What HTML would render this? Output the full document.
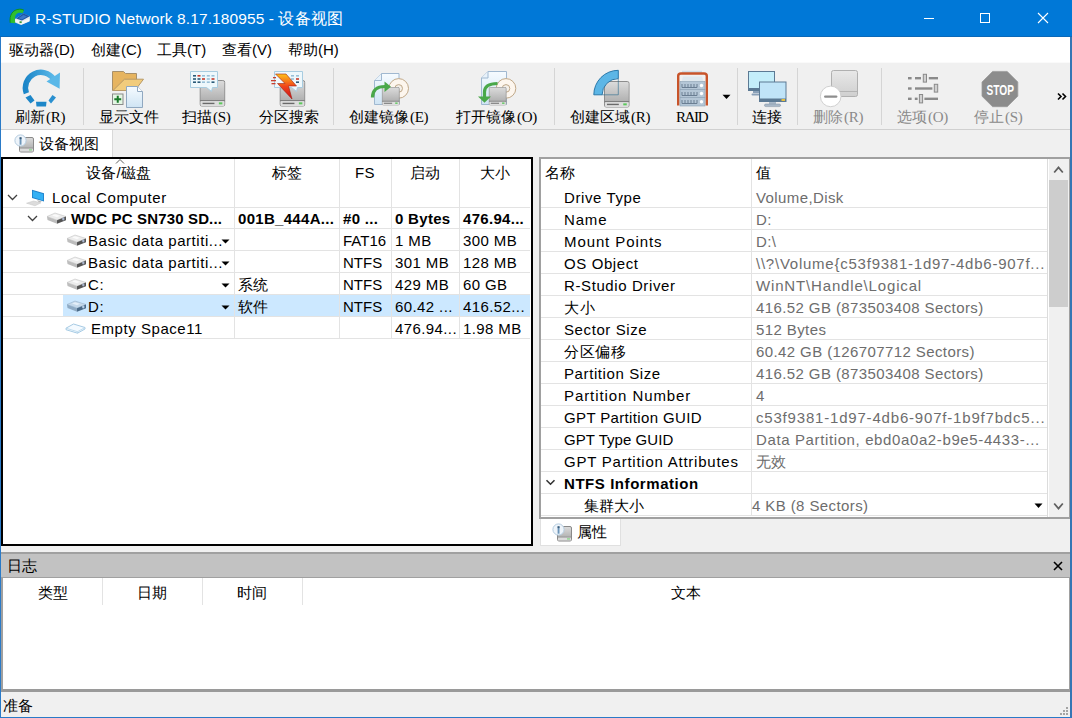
<!DOCTYPE html>
<html><head><meta charset="utf-8">
<style>
*{box-sizing:border-box;margin:0;padding:0}
html,body{width:1072px;height:718px;overflow:hidden;background:#f0f0f0;font-family:"Liberation Sans",sans-serif;font-size:15px;color:#000}
.a{position:absolute;white-space:nowrap}
.t{position:absolute;white-space:nowrap;line-height:17px;height:17px}
.sep{position:absolute;top:68px;width:1px;height:57px;background:#d5d5d5}
.tl{position:absolute;white-space:nowrap;font-size:14.5px;line-height:16px;color:#000}
.hl{position:absolute;height:1px;background:#e3e3e3}
.vl{position:absolute;width:1px;background:#e3e3e3}
.gv{color:#6d6d6d}
.m{font-family:"Liberation Serif",serif;font-size:15px;letter-spacing:-0.3px;margin-left:1px}
</style></head><body>

<svg width="0" height="0" style="position:absolute">
 <defs>
  <linearGradient id="gDrv" x1="0" y1="0" x2="0" y2="1"><stop offset="0" stop-color="#dcdcdc"/><stop offset="1" stop-color="#a4a4a4"/></linearGradient>
  <linearGradient id="gDrvL" x1="0" y1="0" x2="0" y2="1"><stop offset="0" stop-color="#e8e8e8"/><stop offset="1" stop-color="#cfcfcf"/></linearGradient>
  <linearGradient id="gDoc" x1="0" y1="0" x2="0" y2="1"><stop offset="0" stop-color="#f6fbff"/><stop offset="1" stop-color="#cfe4f4"/></linearGradient>
  <linearGradient id="gRef" x1="0" y1="0" x2="1" y2="0"><stop offset="0" stop-color="#1c86c8"/><stop offset="1" stop-color="#5ab8e8"/></linearGradient>
  <linearGradient id="gBolt" x1="0" y1="0" x2="0" y2="1"><stop offset="0" stop-color="#ffc21a"/><stop offset="0.5" stop-color="#f0441a"/><stop offset="1" stop-color="#c8101a"/></linearGradient>
  <symbol id="drv" viewBox="0 0 26 27">
   <rect x="0.5" y="0.5" width="25" height="26" rx="2" fill="url(#gDrv)" stroke="#8c8c8c"/>
   <rect x="1" y="21" width="24" height="5.5" rx="1.5" fill="#dedede"/>
   <line x1="0.5" y1="20.8" x2="25.5" y2="20.8" stroke="#7a7a7a" stroke-width="1"/>
   <rect x="3" y="23" width="12" height="1.4" fill="#6a6a6a"/>
   <rect x="19.5" y="22.6" width="3.5" height="2" fill="#5cc85c"/>
  </symbol>
 </defs>
</svg>
<!-- window frame -->

<!-- title bar -->
<div class="a" id="title" style="left:0;top:0;width:1072px;height:37px;background:#0078d7"></div>
<div class="a" style="left:0;top:36px;width:1072px;height:1px;background:#0a68b8"></div>


<svg class="a" style="left:6px;top:4px" width="28" height="24" viewBox="6 4 28 24">
 <path d="M15 19 L23.5 13.5 L30 16.5 L29.5 21.5 L21 25 L15 22.5 Z" fill="#dfe6ea"/>
 <path d="M16 18.5 L23.5 13.3 L29.8 16.3 L22 20.5 Z" fill="#1d56a8"/>
 <path d="M18.5 18.2 L23.5 15 L27 16.6 L22 19.5 Z" fill="#3a78c8"/>
 <path d="M15.5 21.8 L21.5 24.5 L29.5 21 L29.5 18.5 L22 21.5 L15.5 19.5 Z" fill="#f4f6f6"/>
 <rect x="19.5" y="21.3" width="2.2" height="1.8" fill="#3a9a3a"/>
 <path d="M10.2 22.8 C9.2 15 12.5 9.6 19.5 9.2 C21.5 9.1 23 9.6 24 10.4 L22.5 13.2 C20.5 12.6 18 12.6 16.5 14 C14.8 15.6 14.6 19 15.2 23.2 Z" fill="#2fbf2f"/>
 <path d="M10.2 22.8 C9.2 15 12.5 9.6 19.5 9.2 C21.5 9.1 23 9.6 24 10.4" fill="none" stroke="#109010" stroke-width="0.9"/>
</svg>
<div class="t" style="left:35px;top:10px;color:#fff;letter-spacing:0.1px;font-size:15.5px">R-STUDIO Network 8.17.180955 - 设备视图</div>
<div class="a" style="left:924px;top:18px;width:10px;height:1px;background:#fff"></div>
<div class="a" style="left:980px;top:13px;width:10px;height:10px;border:1px solid #fff"></div>
<svg class="a" style="left:1037px;top:12px" width="12" height="12" viewBox="0 0 12 12"><path d="M1 1 L11 11 M11 1 L1 11" stroke="#fff" stroke-width="1.1"/></svg>
<!-- menu bar -->
<div class="a" style="left:1px;top:37px;width:1070px;height:25px;background:#fff"></div>
<div class="t" style="left:9px;top:41px">驱动器(D)</div>
<div class="t" style="left:91px;top:41px">创建(C)</div>
<div class="t" style="left:157px;top:41px">工具(T)</div>
<div class="t" style="left:222px;top:41px">查看(V)</div>
<div class="t" style="left:288px;top:41px">帮助(H)</div>


<!-- toolbar -->
<div class="a" style="left:1px;top:62px;width:1070px;height:1px;background:#fafafa"></div>

<div class="a" style="left:1px;top:63px;width:1070px;height:66px;background:#f0f0f0"></div>
<div class="sep" style="left:83px"></div>
<div class="sep" style="left:333px"></div>
<div class="sep" style="left:554px"></div>
<div class="sep" style="left:737px"></div>
<div class="sep" style="left:797px"></div>
<div class="sep" style="left:881px"></div>
<!-- refresh -->
<svg class="a" style="left:0;top:60px" width="80" height="60" viewBox="0 60 80 60">
 <path d="M26.4 93.3 A15.5 15.5 0 0 1 53.7 79.1" fill="none" stroke="url(#gRef)" stroke-width="5.5"/>
 <path d="M46.5 81.4 L60 72.5 L59.6 88.7 Z" fill="#5ab8e8"/>
 <path d="M30.04 98.96 A15.5 15.5 0 0 1 26.7 94" fill="none" stroke="#1c86c8" stroke-width="0"/>
 <path d="M25.5 97.5 L30.5 95 L34.5 100.5 L30.5 103.5 Z" fill="#1c86c8"/>
 <path d="M36 101.8 L46.5 101.8 L46 106.5 L36.5 106.5 Z" fill="#1c86c8"/>
 <path d="M48.5 100.5 L52.5 95 L56 97.5 L51 103.5 Z" fill="#2a90d0"/>
</svg>
<!-- show files -->
<svg class="a" style="left:100px;top:60px" width="60" height="60" viewBox="100 60 60 60">
 <path d="M112.5 90.5 V71.5 H123.5 L125.5 73.5 H136.5 V90.5 Z" fill="#e6b460" stroke="#a8906a" stroke-width="1"/>
 <path d="M113 90.5 L124.5 79.2 H143.5 L135 90.5 Z" fill="#f2cc7c" stroke="#b89a68" stroke-width="1"/>
 <path d="M126.5 86.5 H137.5 L142.5 91.5 V107.5 H126.5 Z" fill="url(#gDoc)" stroke="#90a8c0" stroke-width="1"/>
 <path d="M137.5 86.5 V91.5 H142.5" fill="#fff" stroke="#90a8c0" stroke-width="1"/>
 <rect x="112.5" y="94" width="10.5" height="10.5" fill="#e4f6e4" stroke="#8a8a8a"/>
 <path d="M117.75 95.8 V102.7 M114.3 99.25 H121.2" stroke="#1a7a2a" stroke-width="2"/>
</svg>
<!-- scan -->
<svg class="a" style="left:180px;top:60px" width="60" height="60" viewBox="180 60 60 60">
 <use href="#drv" x="199.3" y="80" width="26.3" height="26.7"/>
 <path d="M190.5 71.5 H217.5 V87.5 H212.5 L211.5 91.5 L206.5 87.5 H190.5 Z" fill="#eef8fc" stroke="#a8cce0" stroke-width="1"/>
 <g fill="#2a5a78"><rect x="193" y="75" width="3" height="1.6"/><rect x="193" y="78.2" width="3" height="1.6"/><rect x="197.5" y="78.2" width="3" height="1.6"/><rect x="193" y="81.4" width="3" height="1.6"/><rect x="197.5" y="81.4" width="3" height="1.6"/><rect x="211.5" y="81.4" width="3" height="1.6"/></g>
 <g fill="#c83a2a"><rect x="197.5" y="75" width="3" height="1.6"/><rect x="202" y="78.2" width="3" height="1.6"/><rect x="211.5" y="78.2" width="3" height="1.6"/></g>
 <g fill="#98c0d8"><rect x="202" y="75" width="3" height="1.6"/><rect x="206.8" y="75" width="3" height="1.6"/><rect x="211.5" y="75" width="3" height="1.6"/><rect x="206.8" y="78.2" width="3" height="1.6"/><rect x="202" y="81.4" width="3" height="1.6"/><rect x="206.8" y="81.4" width="3" height="1.6"/></g>
</svg>
<!-- partition search -->
<svg class="a" style="left:260px;top:60px" width="60" height="60" viewBox="260 60 60 60">
 <use href="#drv" x="279.3" y="80" width="26.3" height="26.7"/>
 <path d="M274.5 71.5 H302.5 V87.5 H297.5 L296.5 91.5 L291.5 87.5 H274.5 Z" fill="#eef8fc" stroke="#a8cce0" stroke-width="1"/>
 <g fill="#98c0d8"><rect x="291" y="75" width="3" height="1.6"/><rect x="296" y="75" width="3" height="1.6"/><rect x="291" y="78.2" width="3" height="1.6"/></g>
 <rect x="296" y="78.2" width="3" height="1.6" fill="#c83a2a"/><rect x="296" y="81.4" width="3" height="1.6" fill="#2a5a78"/>
 <path d="M275.5 74 H286 L296.5 86 H288.5 L292 99 L277.5 83.5 H285 Z" fill="url(#gBolt)" stroke="#a02010" stroke-width="0.6"/>
 <g fill="#c84030"><rect x="273" y="77" width="3" height="1.3"/><rect x="271" y="80" width="5" height="1.3"/><rect x="271.5" y="83" width="4" height="1.3"/></g>
</svg>
<!-- create image -->
<svg class="a" style="left:365px;top:60px" width="60" height="60" viewBox="365 60 60 60">
 <path d="M381.5 73.5 H399 V104.5 H374.5 V80.5 Z" fill="url(#gDoc)" stroke="#a0b8d0" stroke-width="1"/>
 <path d="M381.5 73.5 V80.5 H374.5" fill="#e8f2fa" stroke="#a0b8d0" stroke-width="1"/>
 <circle cx="398.7" cy="88.4" r="9.8" fill="#fdf6ee" stroke="#c0a888" stroke-width="1"/>
 <circle cx="398.7" cy="88.4" r="3.8" fill="#f4f0ea" stroke="#c0a888" stroke-width="1"/>
 <use href="#drv" x="381.5" y="87" width="18.5" height="18.5"/>
 <path d="M372.5 97.5 C372.5 90 377 86.5 385 86.5" fill="none" stroke="#4aa84a" stroke-width="3.2"/>
 <path d="M384.5 81.5 L391 86.7 L384.5 92 Z" fill="#4aa84a"/>
</svg>
<!-- open image -->
<svg class="a" style="left:470px;top:60px" width="60" height="60" viewBox="470 60 60 60">
 <path d="M488 71.5 H506.5 V104.5 H481.5 V78 Z" fill="url(#gDoc)" stroke="#a0b8d0" stroke-width="1"/>
 <path d="M488 71.5 V78 H481.5" fill="#e8f2fa" stroke="#a0b8d0" stroke-width="1"/>
 <circle cx="506" cy="88.4" r="9.8" fill="#fdf6ee" stroke="#c0a888" stroke-width="1"/>
 <circle cx="506" cy="88.4" r="3.8" fill="#f4f0ea" stroke="#c0a888" stroke-width="1"/>
 <use href="#drv" x="488.4" y="87" width="18.5" height="18.5"/>
 <path d="M497.5 83.5 C489 83.5 484.5 86 484.5 92 V97" fill="none" stroke="#4aa84a" stroke-width="3.2"/>
 <path d="M478 96.5 H491 L484.5 102.8 Z" fill="#4aa84a"/>
</svg>
<!-- create region -->
<svg class="a" style="left:585px;top:60px" width="60" height="60" viewBox="585 60 60 60">
 <use href="#drv" x="604" y="81" width="25.7" height="26.7"/>
 <path d="M593.8 94.8 A24.5 24.5 0 0 1 618.3 70.3 V78.6 A16.2 16.2 0 0 0 602.1 94.8 Z" fill="#5cb6e6" stroke="#2a78aa" stroke-width="1"/>
 <path d="M602.1 94.8 H618.3 V78.6" fill="none" stroke="#2a6a90" stroke-width="1" opacity="0.6"/>
</svg>
<!-- raid -->
<svg class="a" style="left:670px;top:60px" width="70" height="60" viewBox="670 60 70 60">
 <rect x="682" y="70.8" width="20" height="3" fill="#d0dce6"/>
 <path d="M678.2 105.5 V76 Q678.2 73.5 681 73.5 H704 Q706.8 73.5 706.8 76 V105.5" fill="none" stroke="#c8542a" stroke-width="2.4"/>
 <path d="M681.5 81.5 L683 76.5 H702 L703.5 81.5 Z" fill="#dfe8ee"/>
 <g fill="#b4c6d6" stroke="#8aa0b4" stroke-width="0.6">
  <rect x="680" y="81.5" width="25" height="8"/><rect x="680" y="89.5" width="25" height="8"/><rect x="680" y="97.5" width="25" height="8.5"/>
 </g>
 <g fill="none" stroke="#6a7e92" stroke-width="1">
  <path d="M682 84 V87.5 H697 V84 M685 84 V87.5 M688 84 V87.5 M691 84 V87.5 M694 84 V87.5"/>
  <path d="M682 92 V95.5 H697 V92 M685 92 V95.5 M688 92 V95.5 M691 92 V95.5 M694 92 V95.5"/>
  <path d="M682 100 V103.5 H697 V100 M685 100 V103.5 M688 100 V103.5 M691 100 V103.5 M694 100 V103.5"/>
 </g>
 <g fill="#fff"><circle cx="701.5" cy="85.5" r="1.7"/><circle cx="701.5" cy="93.5" r="1.7"/><circle cx="701.5" cy="101.8" r="1.7"/></g>
 <path d="M722.5 94.8 H730.5 L726.5 99 Z" fill="#000"/>
</svg>
<!-- connect -->
<svg class="a" style="left:740px;top:60px" width="60" height="60" viewBox="740 60 60 60">
 <rect x="753" y="90" width="6" height="3" fill="#8aa0b8"/>
 <rect x="751.5" y="93.5" width="8" height="2" rx="1" fill="#8aa0b8"/>
 <rect x="748.5" y="71.5" width="26" height="19" fill="#c4eefa" stroke="#5c7a94" stroke-width="1"/>
 <rect x="748.5" y="88" width="26" height="2.7" fill="#5c7a94"/>
 <rect x="769" y="101.5" width="7" height="3" fill="#a8b8c8"/>
 <rect x="764.5" y="104" width="16" height="2.6" rx="1.3" fill="#a8b8c8" stroke="#8090a0" stroke-width="0.5"/>
 <rect x="759.5" y="82" width="26.5" height="19.5" fill="#c0e4f8" stroke="#5c7a94" stroke-width="1"/>
 <rect x="759.5" y="98.5" width="26.5" height="3.2" fill="#5c7a94"/>
 <rect x="781.5" y="99" width="3.5" height="2" fill="#e8c040"/>
</svg>
<!-- delete -->
<svg class="a" style="left:810px;top:60px" width="60" height="60" viewBox="810 60 60 60">
 <rect x="831.5" y="70.5" width="26" height="26" rx="2" fill="url(#gDrvL)" stroke="#b0b0b0"/>
 <line x1="832" y1="91.5" x2="857" y2="91.5" stroke="#b4b4b4"/>
 <circle cx="830.7" cy="96.4" r="10.3" fill="#fff" stroke="#d0d0d0" stroke-width="1"/>
 <rect x="824" y="95.4" width="13.4" height="2.4" rx="1.2" fill="#8e8e8e"/>
</svg>
<!-- options -->
<svg class="a" style="left:900px;top:60px" width="45" height="50" viewBox="900 60 45 50">
 <g fill="#8a8a8a">
  <rect x="908" y="77" width="3.6" height="2.4"/><rect x="915" y="77" width="6" height="2.4"/><rect x="928.8" y="77" width="9.2" height="2.4"/>
  <rect x="908" y="87.3" width="3.6" height="2.4"/><rect x="915" y="87.3" width="17.4" height="2.4"/>
  <rect x="908" y="97.6" width="3.6" height="2.4"/><rect x="914.8" y="97.6" width="2.8" height="2.4"/><rect x="924.4" y="97.6" width="13.6" height="2.4"/>
 </g>
 <g fill="#d0d0d0" stroke="#8a8a8a" stroke-width="1">
  <rect x="923.3" y="74.3" width="3.2" height="7.8"/><rect x="934.3" y="84.3" width="3.4" height="7.8"/><rect x="919.4" y="94.5" width="3.2" height="8.4"/>
 </g>
</svg>
<!-- stop -->
<svg class="a" style="left:975px;top:60px" width="50" height="50" viewBox="975 60 50 50">
 <path d="M992.6 71.4 H1007.2 L1017.8 82 V96.2 L1007.2 106.7 H992.6 L982 96.2 V82 Z" fill="#8c8c8c" stroke="#9a9a9a" stroke-width="0.8"/>
 <text x="1000.3" y="94.8" text-anchor="middle" font-family="Liberation Sans" font-weight="bold" font-size="14.8" fill="#fff" textLength="27.5" lengthAdjust="spacingAndGlyphs">STOP</text>
</svg>
<svg class="a" style="left:1056px;top:92px" width="12" height="9" viewBox="0 0 12 9"><path d="M2 1.5 L5 4.5 L2 7.5 M6.5 1.5 L9.5 4.5 L6.5 7.5" fill="none" stroke="#000" stroke-width="1.6"/></svg>

<div class="tl" style="left:15px;top:109px">刷新<span class="m">(R)</span></div>
<div class="tl" style="left:99px;top:109px">显示文件</div>
<div class="tl" style="left:182px;top:109px">扫描<span class="m">(S)</span></div>
<div class="tl" style="left:259px;top:109px">分区搜索</div>
<div class="tl" style="left:349px;top:109px">创建镜像<span class="m">(E)</span></div>
<div class="tl" style="left:456px;top:109px">打开镜像<span class="m">(O)</span></div>
<div class="tl" style="left:570px;top:109px">创建区域<span class="m">(R)</span></div>
<div class="tl" style="left:676px;top:109px"><span class="m" style="letter-spacing:-1.4px;margin-left:0">RAID</span></div>
<div class="tl" style="left:752px;top:109px">连接</div>
<div class="tl" style="left:813px;top:109px;color:#8a8a8a">删除<span class="m">(R)</span></div>
<div class="tl" style="left:897px;top:109px;color:#8a8a8a">选项<span class="m">(O)</span></div>
<div class="tl" style="left:974px;top:109px;color:#8a8a8a">停止<span class="m">(S)</span></div>
<div class="a" style="left:1px;top:129px;width:1070px;height:1px;background:#d0d0d0"></div>

<!-- tab bar -->
<div class="a" style="left:1px;top:130px;width:112px;height:27px;background:#fff;border-right:1px solid #d9d9d9"></div>
<svg class="a" style="left:13px;top:132px" width="22" height="21" viewBox="0 0 22 21">
 <rect x="6.5" y="5.5" width="14" height="14.5" rx="1.5" fill="url(#gDrv)" stroke="#8a8a8a"/>
 <rect x="7" y="16.3" width="13" height="3.2" fill="#dcdcdc"/><line x1="7" y1="16" x2="20" y2="16" stroke="#909090" stroke-width="0.8"/><rect x="16" y="17.2" width="3" height="1.4" fill="#90d890"/>
 <circle cx="7.5" cy="8.5" r="5.6" fill="#eef4fa" stroke="#b4cce0" stroke-width="1"/>
 <rect x="6.6" y="5.3" width="1.9" height="7.4" fill="#6a94b8"/><rect x="6.6" y="5.3" width="1.9" height="1.8" fill="#3a5c78"/>
</svg>
<div class="t" style="left:39px;top:135px">设备视图</div>


<!-- left panel -->
<div class="a" style="left:1px;top:157px;width:532px;height:389px;background:#fff;border:2px solid #000"></div>

<div class="a" style="left:63px;top:295px;width:467px;height:21px;background:#cce8ff"></div>
<div class="hl" style="left:3px;top:207px;width:527px"></div>
<div class="hl" style="left:3px;top:228px;width:527px"></div>
<div class="hl" style="left:3px;top:250px;width:527px"></div>
<div class="hl" style="left:3px;top:272px;width:527px"></div>
<div class="hl" style="left:3px;top:294px;width:527px"></div>
<div class="hl" style="left:3px;top:316px;width:527px"></div>
<div class="hl" style="left:3px;top:338px;width:527px"></div>
<div class="vl" style="left:234px;top:159px;height:180px"></div>
<div class="vl" style="left:339px;top:159px;height:180px"></div>
<div class="vl" style="left:391px;top:159px;height:180px"></div>
<div class="vl" style="left:459px;top:159px;height:180px"></div>
<div class="t" style="left:3px;top:164px;width:231px;text-align:center">设备/磁盘</div>
<svg class="a" style="left:115px;top:158px" width="10" height="7" viewBox="0 0 10 7"><path d="M1 5.5 L5 1.5 L9 5.5" fill="none" stroke="#606060" stroke-width="1"/></svg>
<div class="t" style="left:234px;top:164px;width:105px;text-align:center">标签</div>
<div class="t" style="left:339px;top:164px;width:52px;text-align:center;letter-spacing:0.5px">FS</div>
<div class="t" style="left:391px;top:164px;width:68px;text-align:center">启动</div>
<div class="t" style="left:459px;top:164px;width:71px;text-align:center">大小</div>
<svg class="a" style="left:7px;top:194px" width="11" height="7" viewBox="0 0 11 7"><path d="M1 1 L5.5 5.5 L10 1" fill="none" stroke="#404040" stroke-width="1.3"/></svg>
<svg class="a" style="left:25px;top:188px" width="21" height="19" viewBox="0 0 21 19">
 <path d="M7 1.8 L19 5.2 V13.5 L7 10 Z" fill="#1f7fc8"/>
 <path d="M7.8 3 L18.2 6 V12.4 L7.8 9.3 Z" fill="#33b0f4"/>
 <path d="M12 12 L17 13.5 L14 14.5 Z" fill="#b8b8b8"/>
 <path d="M1.5 15.2 L8.5 13 L16 14.8 L10 17.8 Z" fill="#dcdcdc" stroke="#c4c4c4" stroke-width="0.5"/>
</svg>
<div class="t" style="left:52px;top:189px;letter-spacing:0.65px">Local Computer</div>
<svg class="a" style="left:27px;top:215px" width="11" height="7" viewBox="0 0 11 7"><path d="M1 1 L5.5 5.5 L10 1" fill="none" stroke="#404040" stroke-width="1.3"/></svg>
<svg class="a" style="left:46px;top:212px" width="21" height="13" viewBox="0 0 21 13">
 <path d="M1 4.5 L9 1 L20 4.5 L11 8.2 Z" fill="#ececec" stroke="#bdbdbd" stroke-width="0.5"/>
 <path d="M6 3.5 L9 2.2 L14 3.8 L11 5.2 Z" fill="#fafafa"/>
 <path d="M1 4.5 L11 8.2 V11.8 L1.5 8 Z" fill="#bdbdbd"/>
 <path d="M11 8.2 L20 4.5 V8.2 L11 11.8 Z" fill="#555555"/>
 <ellipse cx="17.3" cy="7" rx="1.2" ry="1.4" fill="#a8b4cc"/>
</svg>
<div class="t" style="left:71px;top:210px;font-weight:bold;letter-spacing:0.15px">WDC PC SN730 SD...</div>
<div class="t" style="left:238px;top:210px;font-weight:bold;letter-spacing:0.3px">001B_444A...</div>
<div class="t" style="left:343px;top:210px;font-weight:bold;letter-spacing:0.3px">#0 ...</div>
<div class="t" style="left:395px;top:210px;font-weight:bold;letter-spacing:0.3px">0 Bytes</div>
<div class="t" style="left:463px;top:210px;font-weight:bold;letter-spacing:0.3px">476.94...</div>
<svg class="a" style="left:66px;top:234px" width="21" height="13" viewBox="0 0 21 13">
 <path d="M1 4.5 L9 1 L20 4.5 L11 8.2 Z" fill="#ececec" stroke="#bdbdbd" stroke-width="0.5"/>
 <path d="M6 3.5 L9 2.2 L14 3.8 L11 5.2 Z" fill="#fafafa"/>
 <path d="M1 4.5 L11 8.2 V11.8 L1.5 8 Z" fill="#bdbdbd"/>
 <path d="M11 8.2 L20 4.5 V8.2 L11 11.8 Z" fill="#555555"/>
 <ellipse cx="17.3" cy="7" rx="1.2" ry="1.4" fill="#a8b4cc"/>
</svg>
<div class="t" style="left:88px;top:232px;letter-spacing:0.55px">Basic data partiti...</div>
<svg class="a" style="left:221px;top:239px" width="9" height="5" viewBox="0 0 9 5"><path d="M0.5 0.5 H8.5 L4.5 4.5 Z" fill="#000"/></svg>
<div class="t" style="left:343px;top:232px;letter-spacing:0px">FAT16</div>
<div class="t" style="left:395px;top:232px;letter-spacing:0.4px">1 MB</div>
<div class="t" style="left:463px;top:232px;letter-spacing:0.4px">300 MB</div>
<svg class="a" style="left:66px;top:256px" width="21" height="13" viewBox="0 0 21 13">
 <path d="M1 4.5 L9 1 L20 4.5 L11 8.2 Z" fill="#ececec" stroke="#bdbdbd" stroke-width="0.5"/>
 <path d="M6 3.5 L9 2.2 L14 3.8 L11 5.2 Z" fill="#fafafa"/>
 <path d="M1 4.5 L11 8.2 V11.8 L1.5 8 Z" fill="#bdbdbd"/>
 <path d="M11 8.2 L20 4.5 V8.2 L11 11.8 Z" fill="#555555"/>
 <ellipse cx="17.3" cy="7" rx="1.2" ry="1.4" fill="#a8b4cc"/>
</svg>
<div class="t" style="left:88px;top:254px;letter-spacing:0.55px">Basic data partiti...</div>
<svg class="a" style="left:221px;top:261px" width="9" height="5" viewBox="0 0 9 5"><path d="M0.5 0.5 H8.5 L4.5 4.5 Z" fill="#000"/></svg>
<div class="t" style="left:343px;top:254px;letter-spacing:0px">NTFS</div>
<div class="t" style="left:395px;top:254px;letter-spacing:0.4px">301 MB</div>
<div class="t" style="left:463px;top:254px;letter-spacing:0.4px">128 MB</div>
<svg class="a" style="left:66px;top:278px" width="21" height="13" viewBox="0 0 21 13">
 <path d="M1 4.5 L9 1 L20 4.5 L11 8.2 Z" fill="#ececec" stroke="#bdbdbd" stroke-width="0.5"/>
 <path d="M6 3.5 L9 2.2 L14 3.8 L11 5.2 Z" fill="#fafafa"/>
 <path d="M1 4.5 L11 8.2 V11.8 L1.5 8 Z" fill="#bdbdbd"/>
 <path d="M11 8.2 L20 4.5 V8.2 L11 11.8 Z" fill="#555555"/>
 <ellipse cx="17.3" cy="7" rx="1.2" ry="1.4" fill="#a8b4cc"/>
</svg>
<div class="t" style="left:88px;top:276px;letter-spacing:0.55px">C:</div>
<svg class="a" style="left:221px;top:283px" width="9" height="5" viewBox="0 0 9 5"><path d="M0.5 0.5 H8.5 L4.5 4.5 Z" fill="#000"/></svg>
<div class="t" style="left:238px;top:276px">系统</div>
<div class="t" style="left:343px;top:276px;letter-spacing:0px">NTFS</div>
<div class="t" style="left:395px;top:276px;letter-spacing:0.4px">429 MB</div>
<div class="t" style="left:463px;top:276px;letter-spacing:0.4px">60 GB</div>
<svg class="a" style="left:66px;top:300px" width="21" height="13" viewBox="0 0 21 13">
 <path d="M1 4.5 L9 1 L20 4.5 L11 8.2 Z" fill="#c4d8ea" stroke="#8eaac4" stroke-width="0.5"/>
 <path d="M6 3.5 L9 2.2 L14 3.8 L11 5.2 Z" fill="#e4eef8"/>
 <path d="M1 4.5 L11 8.2 V11.8 L1.5 8 Z" fill="#8eaac4"/>
 <path d="M11 8.2 L20 4.5 V8.2 L11 11.8 Z" fill="#4a6a88"/>
 <ellipse cx="17.3" cy="7" rx="1.2" ry="1.4" fill="#b8d0e8"/>
</svg>
<div class="t" style="left:88px;top:298px;letter-spacing:0.55px">D:</div>
<svg class="a" style="left:221px;top:305px" width="9" height="5" viewBox="0 0 9 5"><path d="M0.5 0.5 H8.5 L4.5 4.5 Z" fill="#000"/></svg>
<div class="t" style="left:238px;top:298px">软件</div>
<div class="t" style="left:343px;top:298px;letter-spacing:0px">NTFS</div>
<div class="t" style="left:395px;top:298px;letter-spacing:0.4px">60.42 ...</div>
<div class="t" style="left:463px;top:298px;letter-spacing:0.4px">416.52...</div>
<svg class="a" style="left:65px;top:323px" width="21" height="11" viewBox="0 0 21 11">
 <path d="M1 5.2 L8.5 1 L20 4.5 L20 6 L12.5 10.2 L1 6.7 Z" fill="#f4faff" stroke="#9cc4e0" stroke-width="0.9"/>
 <path d="M1 5.2 L12.5 8.7 L20 4.5 M12.5 8.7 V10.2" fill="none" stroke="#b4d4ea" stroke-width="0.8"/>
</svg>
<div class="t" style="left:91px;top:320px;letter-spacing:0.55px">Empty Space11</div>
<div class="t" style="left:395px;top:320px;letter-spacing:0.4px">476.94...</div>
<div class="t" style="left:463px;top:320px;letter-spacing:0.4px">1.98 MB</div>
<!-- right panel -->
<div class="a" style="left:539px;top:157px;width:531px;height:362px;background:#fff;border:2px solid #a0a0a0;border-right:1px solid #a0a0a0"></div>

<div class="hl" style="left:541px;top:207px;width:506px"></div>
<div class="hl" style="left:541px;top:229px;width:506px"></div>
<div class="hl" style="left:541px;top:251px;width:506px"></div>
<div class="hl" style="left:541px;top:273px;width:506px"></div>
<div class="hl" style="left:541px;top:295px;width:506px"></div>
<div class="hl" style="left:541px;top:317px;width:506px"></div>
<div class="hl" style="left:541px;top:339px;width:506px"></div>
<div class="hl" style="left:541px;top:361px;width:506px"></div>
<div class="hl" style="left:541px;top:383px;width:506px"></div>
<div class="hl" style="left:541px;top:405px;width:506px"></div>
<div class="hl" style="left:541px;top:427px;width:506px"></div>
<div class="hl" style="left:541px;top:449px;width:506px"></div>
<div class="hl" style="left:541px;top:471px;width:506px"></div>
<div class="hl" style="left:541px;top:493px;width:506px"></div>
<div class="hl" style="left:541px;top:515px;width:506px"></div>
<div class="vl" style="left:751px;top:159px;height:357px"></div>
<div class="vl" style="left:1047px;top:159px;height:358px;background:#dcdcdc"></div>
<div class="a" style="left:1048px;top:159px;width:21px;height:358px;background:#f0f0f0;border-left:1px solid #fff"></div>
<div class="a" style="left:1049px;top:180px;width:19px;height:127px;background:#cdcdcd"></div>
<svg class="a" style="left:1053px;top:165px" width="11" height="9" viewBox="0 0 11 9"><path d="M1.2 7.5 L5.5 2.5 L9.8 7.5" fill="none" stroke="#606060" stroke-width="1.8"/></svg>
<svg class="a" style="left:1053px;top:502px" width="11" height="9" viewBox="0 0 11 9"><path d="M1.2 1.5 L5.5 6.5 L9.8 1.5" fill="none" stroke="#606060" stroke-width="1.8"/></svg>
<div class="t" style="left:545px;top:164px">名称</div>
<div class="t" style="left:756px;top:164px">值</div>
<div class="t" style="left:564px;top:189px;letter-spacing:0.6px">Drive Type</div>
<div class="t gv" style="left:756px;top:189px;letter-spacing:0.4px">Volume,Disk</div>
<div class="t" style="left:564px;top:211px;letter-spacing:0.85px">Name</div>
<div class="t gv" style="left:756px;top:211px;letter-spacing:0.4px">D:</div>
<div class="t" style="left:564px;top:233px;letter-spacing:0.9px">Mount Points</div>
<div class="t gv" style="left:756px;top:233px;letter-spacing:0.4px">D:\</div>
<div class="t" style="left:564px;top:255px;letter-spacing:0.6px">OS Object</div>
<div class="t gv" style="left:756px;top:255px;letter-spacing:0.76px">\\?\Volume{c53f9381-1d97-4db6-907f...</div>
<div class="t" style="left:564px;top:277px;letter-spacing:0.6px">R-Studio Driver</div>
<div class="t gv" style="left:756px;top:277px;letter-spacing:0.84px">WinNT\Handle\Logical</div>
<div class="t" style="left:564px;top:299px;letter-spacing:0.6px">大小</div>
<div class="t gv" style="left:756px;top:299px;letter-spacing:0.4px">416.52 GB (873503408 Sectors)</div>
<div class="t" style="left:564px;top:321px;letter-spacing:0.6px">Sector Size</div>
<div class="t gv" style="left:756px;top:321px;letter-spacing:0.4px">512 Bytes</div>
<div class="t" style="left:564px;top:343px;letter-spacing:0.6px">分区偏移</div>
<div class="t gv" style="left:756px;top:343px;letter-spacing:0.4px">60.42 GB (126707712 Sectors)</div>
<div class="t" style="left:564px;top:365px;letter-spacing:0.6px">Partition Size</div>
<div class="t gv" style="left:756px;top:365px;letter-spacing:0.4px">416.52 GB (873503408 Sectors)</div>
<div class="t" style="left:564px;top:387px;letter-spacing:0.92px">Partition Number</div>
<div class="t gv" style="left:756px;top:387px;letter-spacing:0.4px">4</div>
<div class="t" style="left:564px;top:409px;letter-spacing:0.36px">GPT Partition GUID</div>
<div class="t gv" style="left:756px;top:409px;letter-spacing:0.81px">c53f9381-1d97-4db6-907f-1b9f7bdc5...</div>
<div class="t" style="left:564px;top:431px;letter-spacing:0.05px">GPT Type GUID</div>
<div class="t gv" style="left:756px;top:431px;letter-spacing:0.62px">Data Partition, ebd0a0a2-b9e5-4433-...</div>
<div class="t" style="left:564px;top:453px;letter-spacing:0.76px">GPT Partition Attributes</div>
<div class="t gv" style="left:756px;top:453px;letter-spacing:0.4px">无效</div>
<svg class="a" style="left:545px;top:479px" width="11" height="7" viewBox="0 0 11 7"><path d="M1.5 1.2 L5.5 5.2 L9.5 1.2" fill="none" stroke="#333" stroke-width="1.6"/></svg>
<div class="t" style="left:564px;top:475px;font-weight:bold;letter-spacing:0.56px">NTFS Information</div>
<div class="t" style="left:584px;top:497px">集群大小</div>
<div class="t gv" style="left:752px;top:497px;letter-spacing:0.4px">4 KB (8 Sectors)</div>
<svg class="a" style="left:1034px;top:503px" width="9" height="6" viewBox="0 0 9 6"><path d="M0.5 0.5 H8.5 L4.5 5 Z" fill="#000"/></svg>
<!-- props tab -->
<div class="a" style="left:540px;top:519px;width:81px;height:27px;background:#fff;border:1px solid #e0e0e0;border-top:none"></div>


<svg class="a" style="left:551px;top:521px" width="22" height="21" viewBox="0 0 22 21">
 <rect x="6.5" y="5.5" width="14" height="14.5" rx="1.5" fill="url(#gDrv)" stroke="#8a8a8a"/>
 <rect x="7" y="16.3" width="13" height="3.2" fill="#dcdcdc"/><line x1="7" y1="16" x2="20" y2="16" stroke="#909090" stroke-width="0.8"/><rect x="16" y="17.2" width="3" height="1.4" fill="#90d890"/>
 <circle cx="7.5" cy="8.5" r="5.6" fill="#eef4fa" stroke="#b4cce0" stroke-width="1"/>
 <rect x="6.6" y="5.3" width="1.9" height="7.4" fill="#6a94b8"/><rect x="6.6" y="5.3" width="1.9" height="1.8" fill="#3a5c78"/>
</svg>
<div class="t" style="left:577px;top:523px">属性</div>
<!-- log -->
<div class="a" style="left:1px;top:552px;width:1070px;height:2px;background:#a0a0a0"></div>
<div class="a" style="left:1px;top:554px;width:1070px;height:23px;background:#c2c2c2"></div>
<div class="a" style="left:1px;top:577px;width:1070px;height:1px;background:#a0a0a0"></div>
<div class="a" style="left:1px;top:578px;width:1069px;height:114px;background:#fff;border-left:2px solid #a0a0a0;border-right:1px solid #a0a0a0;border-bottom:3px solid #9a9a9a"></div>


<div class="t" style="left:7px;top:557px">日志</div>
<svg class="a" style="left:1053px;top:561px" width="10" height="10" viewBox="0 0 10 10"><path d="M1 1 L9 9 M9 1 L1 9" stroke="#000" stroke-width="1.6"/></svg>
<div class="vl" style="left:102px;top:578px;height:27px"></div>
<div class="vl" style="left:202px;top:578px;height:27px"></div>
<div class="vl" style="left:302px;top:578px;height:27px"></div>
<div class="t" style="left:3px;top:584px;width:99px;text-align:center">类型</div>
<div class="t" style="left:102px;top:584px;width:100px;text-align:center">日期</div>
<div class="t" style="left:202px;top:584px;width:100px;text-align:center">时间</div>
<div class="t" style="left:302px;top:584px;width:768px;text-align:center">文本</div>
<div class="t" style="left:3px;top:697px">准备</div>
<div class="a" style="left:1066px;top:707px;width:2px;height:2px;background:#a4a4a4"></div>
<div class="a" style="left:1063px;top:710px;width:2px;height:2px;background:#a4a4a4"></div>
<div class="a" style="left:1066px;top:710px;width:2px;height:2px;background:#a4a4a4"></div>
<div class="a" style="left:1060px;top:713px;width:2px;height:2px;background:#a4a4a4"></div>
<div class="a" style="left:1063px;top:713px;width:2px;height:2px;background:#a4a4a4"></div>
<div class="a" style="left:1066px;top:713px;width:2px;height:2px;background:#a4a4a4"></div>
<!-- status bar -->
<div class="a" style="left:0;top:717px;width:1072px;height:1px;background:#2a7ac7"></div>
<div class="a" style="left:0;top:37px;width:1072px;height:681px;border:1px solid #2a7ac7;border-top:none;border-right:2px solid #3576b4"></div>
</body></html>
